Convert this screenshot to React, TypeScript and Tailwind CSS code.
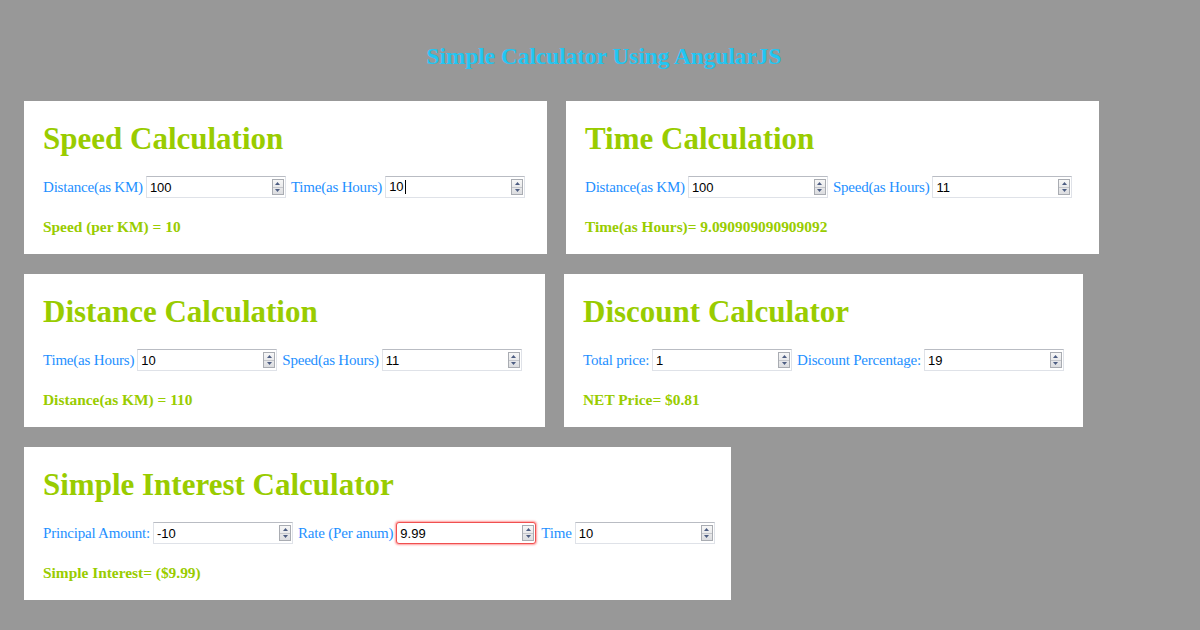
import React from "react";

type Field = { label: string; value: string; focused?: boolean; caret?: boolean };
type Calc = { title: string; width: string; fields: Field[]; result: string };

const rows: Calc[][] = [
    [
        {
            title: "Speed Calculation",
            width: "w-[523px]",
            fields: [
                { label: "Distance(as KM)", value: "100" },
                { label: "Time(as Hours)", value: "10", caret: true },
            ],
            result: "Speed (per KM) = 10",
        },
        {
            title: "Time Calculation",
            width: "w-[533px]",
            fields: [
                { label: "Distance(as KM)", value: "100" },
                { label: "Speed(as Hours)", value: "11" },
            ],
            result: "Time(as Hours)= 9.090909090909092",
        },
    ],
    [
        {
            title: "Distance Calculation",
            width: "w-[521px]",
            fields: [
                { label: "Time(as Hours)", value: "10" },
                { label: "Speed(as Hours)", value: "11" },
            ],
            result: "Distance(as KM) = 110",
        },
        {
            title: "Discount Calculator",
            width: "w-[519px]",
            fields: [
                { label: "Total price:", value: "1" },
                { label: "Discount Percentage:", value: "19" },
            ],
            result: "NET Price= $0.81",
        },
    ],
    [
        {
            title: "Simple Interest Calculator",
            width: "w-[707px]",
            fields: [
                { label: "Principal Amount:", value: "-10" },
                { label: "Rate (Per anum)", value: "9.99", focused: true },
                { label: "Time", value: "10" },
            ],
            result: "Simple Interest= ($9.99)",
        },
    ],
];

function Spinner() {
    return (
        <div className="flex h-[16px] w-[12px] shrink-0 flex-col border border-[#a9acb2] bg-gradient-to-b from-[#f7f7f7] to-[#dcdde0]">
            <div className="flex flex-1 items-center justify-center border-b border-[#c4c6cb]">
                <svg width="5" height="3" viewBox="0 0 5 3">
                    <path d="M2.5 0 L5 3 L0 3 Z" fill="#4d5d82" />
                </svg>
            </div>
            <div className="flex flex-1 items-center justify-center">
                <svg width="5" height="3" viewBox="0 0 5 3">
                    <path d="M0 0 L5 0 L2.5 3 Z" fill="#4d5d82" />
                </svg>
            </div>
        </div>
    );
}

function NumberBox({ value, focused, caret }: { value: string; focused?: boolean; caret?: boolean }) {
    return (
        <div
            className={`flex h-[22px] w-[140px] shrink-0 items-center bg-white pl-[3px] pr-[1px] font-['Liberation_Sans',Arial,sans-serif] text-[13px] tracking-normal text-black ${
                focused
                    ? "rounded-[3px] border border-[#f05050] shadow-[0_0_2px_1px_#ff9c9c]"
                    : "border border-[#dfe2e8] border-t-[#b9bcc3]"
            }`}
        >
            <span className="flex-1 leading-none">
                {value}
                {caret && <span className="ml-px inline-block h-[14px] w-px bg-black align-middle" />}
            </span>
            <Spinner />
        </div>
    );
}

function Card({ calc }: { calc: Calc }) {
    return (
        <div className={`${calc.width} bg-white px-[19px] pt-5 pb-[18px]`}>
            <h1 className="mb-[19px] text-[31px] font-bold leading-[36px] whitespace-nowrap text-[#99cc00]">{calc.title}</h1>
            <div className="flex h-[22px] items-center gap-[3px] text-[15px] tracking-[-0.2px] whitespace-nowrap text-[#1e90ff]">
                {calc.fields.map((f, i) => (
                    <React.Fragment key={i}>
                        <span className={`shrink-0 ${i > 0 ? "ml-[2px]" : ""}`}>{f.label}</span>
                        <NumberBox value={f.value} focused={f.focused} caret={f.caret} />
                    </React.Fragment>
                ))}
            </div>
            <div className="mt-5 text-[15.4px] font-bold leading-[18px] whitespace-nowrap text-[#99cc00]">{calc.result}</div>
        </div>
    );
}

export default function App() {
    return (
        <div className="min-h-[630px] bg-[#989898] font-['Liberation_Serif','Times_New_Roman',serif]">
            <h2 className="pl-[8px] pt-[43px] text-center text-[23.3px] font-bold leading-[26px] text-[#21c6f3]">
                Simple Calculator Using AngularJS
            </h2>
            <div className="mt-[32px] flex flex-col gap-5 pl-6">
                {rows.map((row, r) => (
                    <div key={r} className="flex gap-[19px]">
                        {row.map((c) => (
                            <Card key={c.title} calc={c} />
                        ))}
                    </div>
                ))}
            </div>
        </div>
    );
}
